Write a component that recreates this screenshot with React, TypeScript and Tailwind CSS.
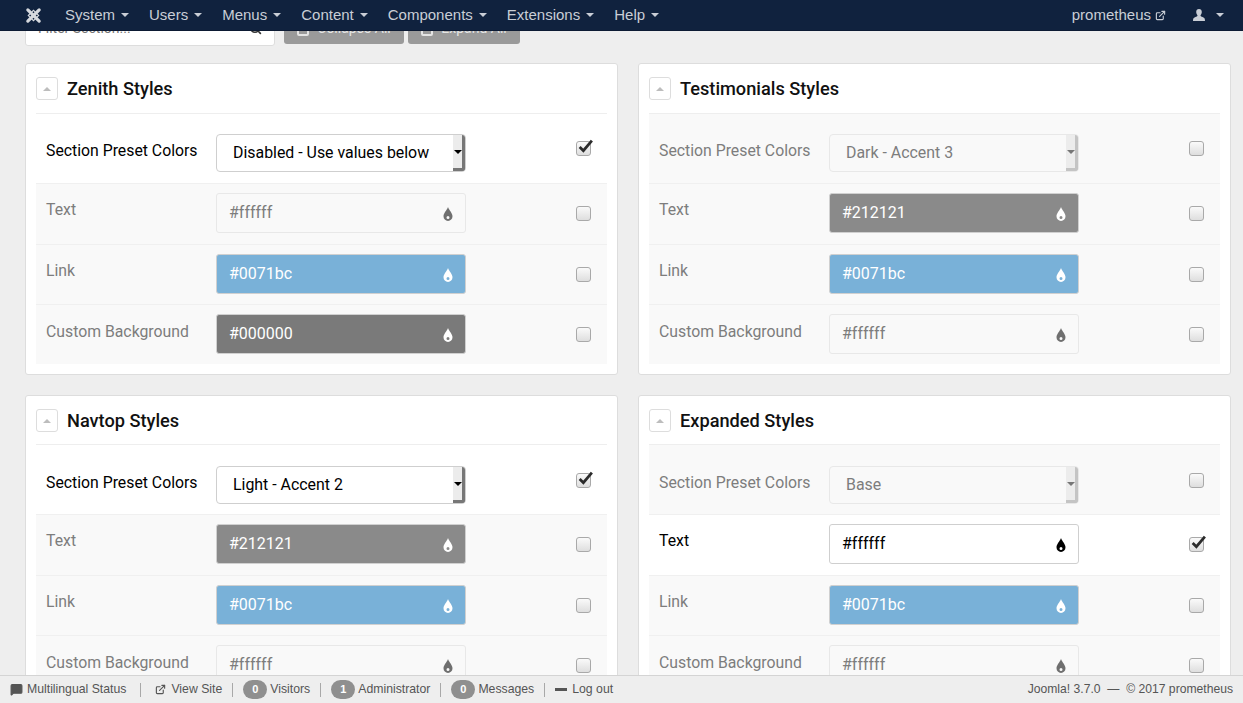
import React from "react";
import { ExternalLink, MessageSquare, Search } from "lucide-react";

type FieldRow = {
  label: string;
  value: string;
  kind: "select" | "color";
  checked?: boolean;
  swatch?: "blue" | "gray" | "dark";
};

type Panel = { title: string; rows: FieldRow[] };

const left: Panel[] = [
  {
    title: "Zenith Styles",
    rows: [
      { label: "Section Preset Colors", value: "Disabled - Use values below", kind: "select", checked: true },
      { label: "Text", value: "#ffffff", kind: "color" },
      { label: "Link", value: "#0071bc", kind: "color", swatch: "blue" },
      { label: "Custom Background", value: "#000000", kind: "color", swatch: "dark" },
    ],
  },
  {
    title: "Navtop Styles",
    rows: [
      { label: "Section Preset Colors", value: "Light - Accent 2", kind: "select", checked: true },
      { label: "Text", value: "#212121", kind: "color", swatch: "gray" },
      { label: "Link", value: "#0071bc", kind: "color", swatch: "blue" },
      { label: "Custom Background", value: "#ffffff", kind: "color" },
    ],
  },
];

const right: Panel[] = [
  {
    title: "Testimonials Styles",
    rows: [
      { label: "Section Preset Colors", value: "Dark - Accent 3", kind: "select" },
      { label: "Text", value: "#212121", kind: "color", swatch: "gray" },
      { label: "Link", value: "#0071bc", kind: "color", swatch: "blue" },
      { label: "Custom Background", value: "#ffffff", kind: "color" },
    ],
  },
  {
    title: "Expanded Styles",
    rows: [
      { label: "Section Preset Colors", value: "Base", kind: "select" },
      { label: "Text", value: "#ffffff", kind: "color", checked: true },
      { label: "Link", value: "#0071bc", kind: "color", swatch: "blue" },
      { label: "Custom Background", value: "#ffffff", kind: "color" },
    ],
  },
];

const menus = ["System", "Users", "Menus", "Content", "Components", "Extensions", "Help"];

function Caret({ className }: { className: string }) {
  return <span className={`inline-block h-0 w-0 border-x-4 border-t-4 border-x-transparent ${className}`} />;
}

function Drop({ className }: { className: string }) {
  return (
    <svg viewBox="0 0 10 14" className={`h-[14px] w-[10px] ${className}`}>
      <path
        fill="currentColor"
        fillRule="evenodd"
        d="M5 0C6 3 9.500 6 9.500 9.300 9.500 12 7.500 14 5 14S.5 12 .5 9.300C.5 6 4 3 5 0ZM5 9A1.500 1.500 0 0 0 3.500 10.500 1.500 1.500 0 0 0 6.500 10.500 1.500 1.500 0 0 0 5 9Z"
      />
    </svg>
  );
}

function Checkbox({ checked }: { checked?: boolean }) {
  return (
    <span className="relative block h-[15px] w-[15px] rounded-[3px] border border-[#a9a9a9] bg-gradient-to-b from-[#fafafa] to-[#dedede]">
      {checked ? (
        <svg viewBox="0 0 16 14" className="absolute -top-[3px] left-0 h-[15px] w-[17px] text-[#2b2b2b]">
          <path d="M2.500 7.500 6 11 14 1.500" fill="none" stroke="currentColor" strokeWidth="2.600" />
        </svg>
      ) : null}
    </span>
  );
}

function SelectBox({ value, on }: { value: string; on: boolean }) {
  return (
    <div
      className={`flex h-[38px] w-[250px] items-stretch overflow-hidden rounded-[4px] border ${
        on ? "border-[#cfcfcf] bg-white text-black" : "border-[#e8e8e8] bg-[#f9f9f9] text-[#7d7d7d]"
      }`}
    >
      <span className="flex flex-1 items-center pl-4 text-[15.9px]">{value}</span>
      <span
        className={`flex w-[12px] items-center justify-center border-r-[3px] border-b-[3px] bg-[#ececec] ${
          on ? "border-[#777777]" : "border-[#c4c4c4]"
        }`}
      >
        <Caret className={on ? "border-t-black" : "border-t-[#777777]"} />
      </span>
    </div>
  );
}

function ColorBox({ row, on }: { row: FieldRow; on: boolean }) {
  if (row.swatch) {
    const bg =
      row.swatch === "blue" ? "bg-[#79b1d8]" : row.swatch === "gray" ? "bg-[#8a8a8a]" : "bg-[#7a7a7a]";
    return (
      <div className={`flex h-10 w-[250px] items-center justify-between rounded-[3px] border border-[#d0d0d0] px-[12px] text-[16px] text-white ${bg}`}>
        {row.value}
        <Drop className="mt-[2px] text-white" />
      </div>
    );
  }
  return (
    <div
      className={`flex h-10 w-[250px] items-center justify-between rounded-[3px] border px-[12px] text-[16px] ${
        on ? "border-[#cfcfcf] bg-white text-black" : "border-[#e8e8e8] bg-[#f9f9f9] text-[#7d7d7d]"
      }`}
    >
      {row.value}
      <Drop className={`mt-[2px] ${on ? "text-black" : "text-[#6f6f6f]"}`} />
    </div>
  );
}

function Row({ row, index, tight }: { row: FieldRow; index: number; tight: boolean }) {
  const on = !!row.checked;
  const first = index === 0;
  const height = first
    ? tight
      ? "h-[69px] pt-[21px]"
      : "h-[69px] pt-[20px]"
    : index === 1
      ? "h-[61px] pt-[9px]"
      : "h-[60px] pt-[9px]";
  return (
    <div
      className={`flex items-start pl-[10px] ${height} ${first ? "" : "border-t border-[#f0f0f0]"} ${
        on ? "bg-white" : "bg-[#f9f9f9]"
      }`}
    >
      <div
        className={`w-[170px] text-[15.8px] leading-[22px] ${index === 3 ? "pt-[7px]" : "pt-[6px]"} ${
          on ? "text-black" : "text-[#7d7d7d]"
        }`}
      >
        {row.label}
      </div>
      {row.kind === "select" ? <SelectBox value={row.value} on={on} /> : <ColorBox row={row} on={on} />}
      <div className={`ml-[110px] ${first ? "pt-[7px]" : "pt-[13px]"}`}>
        <Checkbox checked={row.checked} />
      </div>
    </div>
  );
}

function Card({ panel, tight = false }: { panel: Panel; tight?: boolean }) {
  return (
    <section className="rounded-[3px] border border-[#dddddd] bg-white px-[10px] pt-[13px] pb-[10px]">
      <div className={`flex items-start gap-[9px] border-b border-[#eeeeee] ${tight ? "h-[36px]" : "h-[37px]"}`}>
        <button
          type="button"
          className="flex h-[23px] w-[22px] items-center justify-center rounded-[3px] border border-[#dddddd] bg-white"
        >
          <span className="h-0 w-0 border-x-[4px] border-b-[4px] border-x-transparent border-b-[#bdbdbd]" />
        </button>
        <h2 className="text-[18.2px] leading-[23px] font-medium text-[#111111]">{panel.title}</h2>
      </div>
      <div>
        {panel.rows.map((row, i) => (
          <Row key={row.label} row={row} index={i} tight={tight} />
        ))}
      </div>
    </section>
  );
}

function Sep() {
  return <span className="h-[14px] w-px bg-[#a8a8a8]" />;
}

function Count({ n, label }: { n: string; label: string }) {
  return (
    <span className="flex items-center gap-[3px]">
      <span className="flex h-[19px] w-[24px] items-center justify-center rounded-full bg-[#8f8f8f] text-[11px] font-bold text-white">
        {n}
      </span>
      {label}
    </span>
  );
}

export default function App() {
  return (
    <div className="flex h-[703px] w-[1243px] flex-col overflow-hidden bg-[#eeeeee] font-['Roboto',sans-serif]">
      <header className="z-10 flex h-[31px] shrink-0 items-center border-b border-[#0c1a33] bg-[#10223e] text-[15px] text-[#c9ced6] font-['Liberation_Sans',sans-serif]">
        <svg viewBox="0 0 18 18" className="mr-[23px] ml-[25px] h-[17px] w-[17px] text-[#d6d9de]">
          <g fill="none" stroke="currentColor" strokeLinecap="round">
            <path d="M3 3 15 15" strokeWidth="3.400" />
            <path d="M15 3 3 15" strokeWidth="3.400" />
            <path d="M3.500 9 9 3.500 14.500 9 9 14.500Z" strokeWidth="1.200" />
          </g>
        </svg>
        <nav className="flex items-center gap-[20px]">
          {menus.map((m) => (
            <span key={m} className="flex items-center gap-[6px]">
              {m}
              <Caret className="border-t-[#c9ced6]" />
            </span>
          ))}
        </nav>
        <div className="ml-auto flex items-center pr-[19px]">
          <span>prometheus</span>
          <ExternalLink className="ml-[4px] h-[11px] w-[11px]" strokeWidth={2.500} />
          <svg viewBox="0 0 12 12" className="ml-[27px] h-[12px] w-[12px]">
            <path
              fill="currentColor"
              d="M6 0C7.800 0 8.800 1.300 8.800 3.100 8.800 4.600 8 5.800 7.500 6.300 7.500 7.300 8.500 7.700 10 8.300 11.300 8.800 12 9.500 12 12H0C0 9.500.7 8.800 2 8.300 3.500 7.700 4.500 7.300 4.500 6.300 4 5.800 3.200 4.600 3.200 3.100 3.200 1.300 4.200 0 6 0Z"
            />
          </svg>
          <Caret className="ml-[11px] border-t-[#c9ced6]" />
        </div>
      </header>

      <main className="min-h-0 flex-1 overflow-hidden px-[25px]">
        <div className="-mt-[1px] flex h-[16px] items-end gap-[9px] overflow-hidden text-[14px]">
          <div className="flex h-[40px] w-[250px] shrink-0 items-end justify-between rounded-[3px] border border-[#dddddd] bg-white px-3 pb-[6px] text-[#777777]">
            <span>Filter Section...</span>
            <Search className="mb-[4px] h-[13px] w-[13px] text-[#333333]" strokeWidth={3} />
          </div>
          <div className="mb-[2px] flex h-[40px] items-end gap-[4px]">
            <span className="flex h-[40px] w-[120px] items-end justify-center gap-[8px] rounded-[3px] bg-[#9a9a9a] pb-[5px] text-[#e4e4e4]">
              <span className="mb-[3px] h-[12px] w-[12px] rounded-[2px] border-2 border-[#e4e4e4]" />
              Collapse All
            </span>
            <span className="flex h-[40px] w-[112px] items-end justify-center gap-[8px] rounded-[3px] bg-[#9a9a9a] pb-[5px] text-[#e4e4e4]">
              <span className="mb-[3px] h-[12px] w-[12px] rounded-[2px] border-2 border-[#e4e4e4]" />
              Expand All
            </span>
          </div>
        </div>
        <div className="mt-[17px] grid grid-cols-[593px_593px] gap-x-[20px]">
          <div className="flex flex-col gap-[20px]">
            <Card panel={left[0]} />
            <Card panel={left[1]} tight />
          </div>
          <div className="flex flex-col gap-[20px]">
            <Card panel={right[0]} />
            <Card panel={right[1]} tight />
          </div>
        </div>
      </main>

      <footer className="z-10 flex h-[28px] shrink-0 items-center gap-[10px] border-t border-[#d4d4d4] bg-[#eeeeee] pr-[10px] pl-[10px] text-[12.25px] text-[#555555] font-['Liberation_Sans',sans-serif]">
        <span className="flex items-center gap-[4px]">
          <MessageSquare className="h-[13px] w-[13px] text-[#555555]" fill="currentColor" />
          Multilingual Status
        </span>
        <span className="ml-[4px] flex items-center"><Sep /></span>
        <span className="ml-[4px] flex items-center gap-[5px]">
          <ExternalLink className="h-[11px] w-[11px]" strokeWidth={2.500} />
          View Site
        </span>
        <Sep />
        <Count n="0" label="Visitors" />
        <Sep />
        <Count n="1" label="Administrator" />
        <Sep />
        <Count n="0" label="Messages" />
        <Sep />
        <span className="flex items-center gap-[5px]">
          <span className="h-[3px] w-[12px] bg-[#555555]" />
          Log out
        </span>
        <span className="ml-auto text-[12.15px]">Joomla! 3.7.0 &nbsp;— &nbsp;© 2017 prometheus</span>
      </footer>
    </div>
  );
}
